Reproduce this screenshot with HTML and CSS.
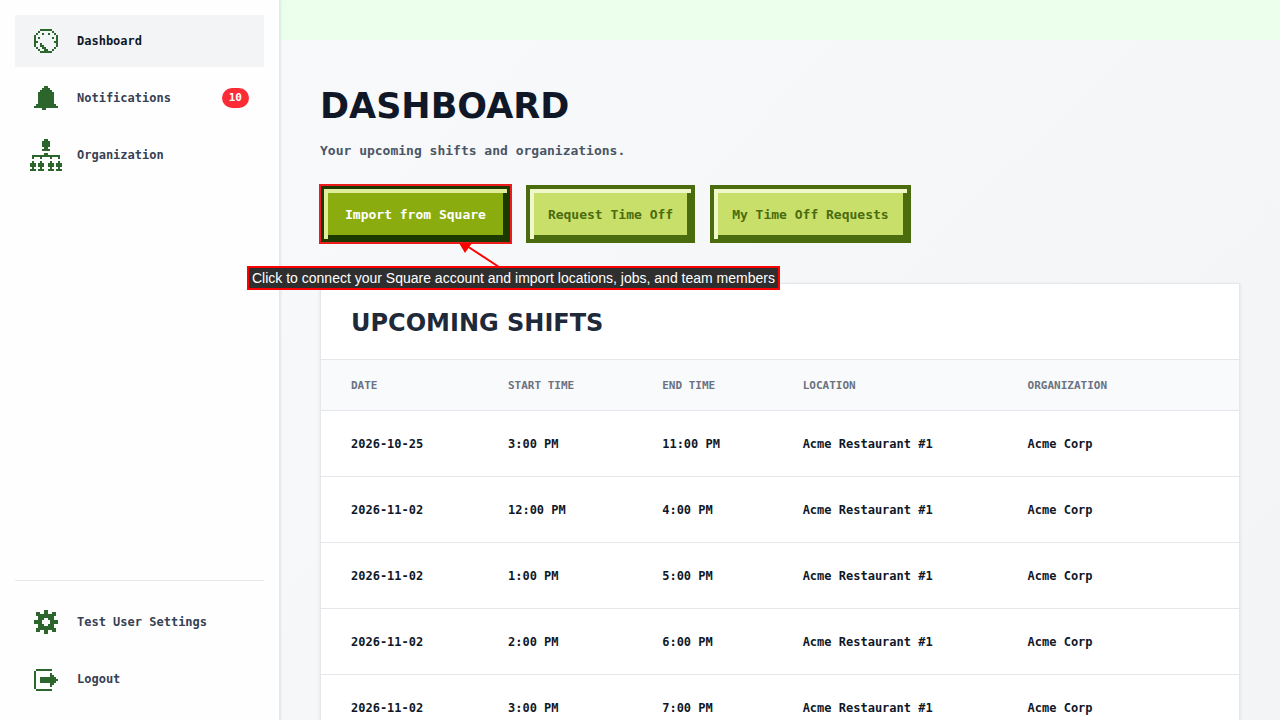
FILE: index.html
```
<!DOCTYPE html>
<html lang="en">
<head>
  <meta charset="UTF-8">
  <meta name="viewport" content="width=device-width, initial-scale=1.0">
  <title>Dashboard</title>
  <link rel="stylesheet" href="styles.css">
</head>
<body>

<aside class="sidebar">
  <nav class="nav">
    <a href="#" class="nav-item active">
      <span class="nav-icon">
        <svg width="24" height="24" viewBox="0 0 12 12" shape-rendering="crispEdges"><path d="M3 0h6v1H3zM2 1h1v1H2zM9 1h1v1H9zM1 2h1v1H1zM4 2h1v1H4zM7 2h1v1H7zM10 2h1v1h-1zM0 3h1v6H0zM11 3h1v6h-1zM2 4h1v1H2zM9 4h1v1H9zM1 6h1v1H1zM10 6h1v1h-1zM3 7h1v1H3zM3 8h2v1H3zM4 9h2v1H4zM5 10h2v1H5zM1 9h1v1H1zM10 9h1v1h-1zM2 10h1v1H2zM9 10h1v1H9zM3 11h6v1H3z"/></svg>
      </span>
      Dashboard
    </a>
    <a href="#" class="nav-item">
      <span class="nav-icon">
        <svg width="24" height="24" viewBox="0 0 12 12" shape-rendering="crispEdges"><path d="M5 0h2v1h1v1h1v1h1v6h1v1h1v1H6v1H4v-1H0v-1h1V9h1V3h1V2h1V1h1z"/></svg>
      </span>
      Notifications
      <span class="badge">10</span>
    </a>
    <a href="#" class="nav-item">
      <span class="nav-icon">
        <svg width="32" height="32" viewBox="0 0 16 16" shape-rendering="crispEdges"><path d="M7 0h2v1H7zM6 1h4v3H6zM7 4h2v1H7zM6 5h4v1H6zM7 7h2v1H7zM1 8h14v1H1zM1 9h1v1H1zM5 9h1v1H5zM10 9h1v1h-1zM14 9h1v1h-1zM1 11h1v1h1v2H2v1h1v1H0v-1h1v-1H0v-2h1zM5 11h1v1h1v2H6v1h1v1H4v-1h1v-1H4v-2h1zM10 11h1v1h1v2h-1v1h1v1H9v-1h1v-1H9v-2h1zM14 11h1v1h1v2h-1v1h1v1h-3v-1h1v-1h-1v-2h1z"/></svg>
      </span>
      Organization
    </a>
  </nav>
  <nav class="nav nav-bottom">
    <a href="#" class="nav-item">
      <span class="nav-icon">
        <svg width="24" height="24" viewBox="0 0 12 12" shape-rendering="crispEdges"><path fill-rule="evenodd" d="M5 0h2v2h2V1h2v2h-1v2h2v2h-2v2h1v2H9v-1H7v2H5v-2H3v1H1V9h1V7H0V5h2V3H1V1h2v1h2zM5 4v1H4v2h1v1h2V7h1V5H7V4z"/></svg>
      </span>
      Test User Settings
    </a>
    <a href="#" class="nav-item">
      <span class="nav-icon">
        <svg width="24" height="24" viewBox="0 -1 12 12" shape-rendering="crispEdges"><path d="M1 0h8v1H1zM0 1h1v9H0zM1 10h8v1H1zM3 4h5V2h1v1h1v1h1v1h1v1h-1v1h-1v1H9v1H8V7H3z"/></svg>
      </span>
      Logout
    </a>
  </nav>
</aside>

<main class="main">
  <div class="topbar"></div>
  <div class="content">
    <h1>DASHBOARD</h1>
    <p class="subtitle">Your upcoming shifts and organizations.</p>

    <div class="actions">
      <div class="tour">
        <button class="btn btn-primary">Import from Square</button>
        <svg class="tour-arrow" width="46" height="26" viewBox="0 0 46 26"><path d="M8 3l32 21" stroke="#f00" stroke-width="2"/><path d="M0 0h13L6 10z" fill="#f00"/></svg>
        <div class="tour-label">Click to connect your Square account and import locations, jobs, and team members</div>
      </div>
      <button class="btn">Request Time Off</button>
      <button class="btn">My Time Off Requests</button>
    </div>

    <section class="card">
      <h2>UPCOMING SHIFTS</h2>
      <table>
        <colgroup>
          <col class="col-date">
          <col class="col-start">
          <col class="col-end">
          <col class="col-location">
          <col>
        </colgroup>
        <thead>
          <tr><th>DATE</th><th>START TIME</th><th>END TIME</th><th>LOCATION</th><th>ORGANIZATION</th></tr>
        </thead>
        <tbody>
          <tr><td>2026-10-25</td><td>3:00 PM</td><td>11:00 PM</td><td>Acme Restaurant #1</td><td>Acme Corp</td></tr>
          <tr><td>2026-11-02</td><td>12:00 PM</td><td>4:00 PM</td><td>Acme Restaurant #1</td><td>Acme Corp</td></tr>
          <tr><td>2026-11-02</td><td>1:00 PM</td><td>5:00 PM</td><td>Acme Restaurant #1</td><td>Acme Corp</td></tr>
          <tr><td>2026-11-02</td><td>2:00 PM</td><td>6:00 PM</td><td>Acme Restaurant #1</td><td>Acme Corp</td></tr>
          <tr><td>2026-11-02</td><td>3:00 PM</td><td>7:00 PM</td><td>Acme Restaurant #1</td><td>Acme Corp</td></tr>
        </tbody>
      </table>
    </section>
  </div>
</main>

</body>
</html>
```
FILE: styles.css
```
* {
  box-sizing: border-box;
}

body {
  margin: 0;
  display: flex;
  align-items: flex-start;
  background: linear-gradient(135deg, #f9fafb, #f3f4f6);
  font-family: "DejaVu Sans Mono", "Liberation Mono", monospace;
  font-size: 12px;
  font-weight: bold;
  color: #101828;
}

/* sidebar */
.sidebar {
  position: sticky;
  top: 0;
  display: flex;
  flex-direction: column;
  justify-content: space-between;
  flex: none;
  width: 280px;
  height: 100vh;
  padding: 15px;
  border-right: 1px solid #e5e7eb;
  background: #fefefe;
  box-shadow: 1px 0 2px rgba(0, 0, 0, 0.08);
}

.nav {
  display: flex;
  flex-direction: column;
  gap: 5px;
}

.nav-bottom {
  border-top: 1px solid #e5e7eb;
  padding-top: 15px;
}

.nav-item {
  display: flex;
  align-items: center;
  gap: 15px;
  height: 52px;
  padding: 0 15px;
  color: #364153;
  text-decoration: none;
}

.nav-item.active {
  background: #f3f4f6;
  color: #101828;
}

.nav-icon {
  display: flex;
  justify-content: center;
  width: 32px;
}

.nav-icon svg {
  fill: #2d662d;
}

.badge {
  margin-left: auto;
  padding: 0 7px;
  border-radius: 10px;
  background: #fb2c36;
  color: #fff;
  font-size: 11px;
  line-height: 20px;
}

/* main area */
.main {
  flex: 1;
  min-width: 0;
}

.topbar {
  height: 40px;
  background: #ecffec;
}

.content {
  padding: 40px;
}

h1, h2 {
  margin: 0;
  font-family: "DejaVu Sans", sans-serif;
}

h1 {
  font-size: 35px;
  line-height: 52px;
}

.subtitle {
  margin: 8px 0 24px;
  font-size: 13px;
  line-height: 21px;
  color: #4a5565;
}

.actions {
  display: flex;
  gap: 15px;
  margin-bottom: 40px;
}

.btn {
  display: block;
  height: 58px;
  padding: 0 18px;
  border: 4px solid #4a6b0e;
  background: #c8df6a;
  box-shadow: inset 4px 4px #f0f7c8, inset -4px -4px #4a6b0e;
  color: #4a6b0e;
  font: inherit;
  font-size: 13px;
  cursor: pointer;
}

.btn-primary {
  padding: 0 21px;
  border-color: #1c3a00;
  background: #8bac0f;
  box-shadow: inset 4px 4px #e0ee9a, inset -4px -4px #1c3a00;
  color: #fff;
  outline: 2px solid #ec1c1c;
  outline-offset: -1px;
}

.tour {
  position: relative;
}

.tour-arrow {
  position: absolute;
  left: 139px;
  top: 58px;
}

.tour-label {
  position: absolute;
  left: -73px;
  top: 81px;
  z-index: 2;
  padding: 0 3px;
  border: 2px solid #f00;
  background: rgba(34, 34, 34, 0.94);
  color: #fff;
  font: 14px/20px "Liberation Sans", Arial, sans-serif;
  white-space: nowrap;
}

/* shifts table */
.card {
  border: 1px solid #e5e7eb;
  background: #fff;
  box-shadow: 0 1px 3px rgba(0, 0, 0, 0.1);
}

h2 {
  padding: 24px 30px 21px;
  border-bottom: 1px solid #e5e7eb;
  font-size: 24px;
  line-height: 30px;
  color: #1e2939;
}

table {
  width: 100%;
  table-layout: fixed;
  border-collapse: collapse;
}

.col-date {
  width: 17.1%;
}

.col-start {
  width: 16.8%;
}

.col-end {
  width: 15.3%;
}

.col-location {
  width: 24.5%;
}

th, td {
  padding: 2px 30px 0;
  border-bottom: 1px solid #e5e7eb;
  text-align: left;
  white-space: nowrap;
}

th {
  height: 50px;
  background: #f9fafb;
  font-size: 11px;
  color: #6a7282;
}

td {
  height: 66px;
}
```
